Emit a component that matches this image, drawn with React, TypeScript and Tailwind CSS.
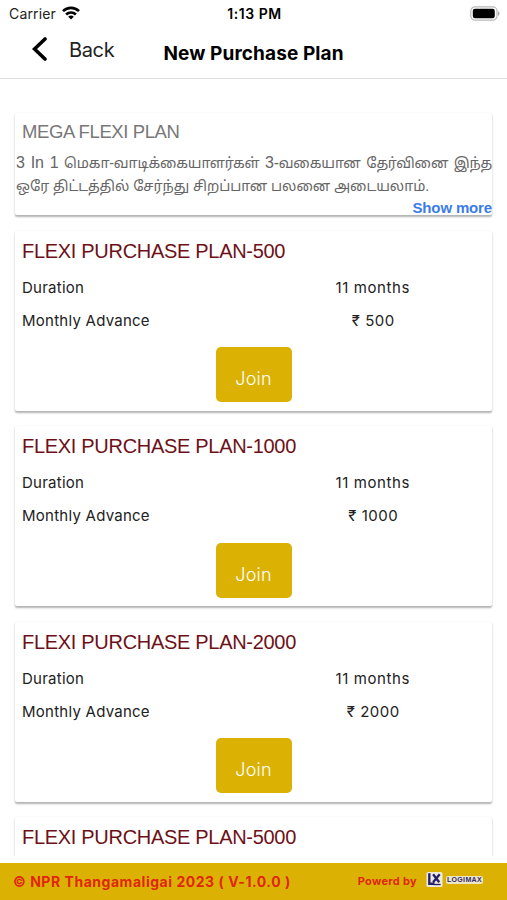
const plans = [
  { name: 'FLEXI PURCHASE PLAN-500', duration: '11 months', advance: '₹ 500' },
  { name: 'FLEXI PURCHASE PLAN-1000', duration: '11 months', advance: '₹ 1000' },
  { name: 'FLEXI PURCHASE PLAN-2000', duration: '11 months', advance: '₹ 2000' },
];

export default function App() {
  return (
    <div className="flex h-[900px] w-[507px] flex-col overflow-hidden bg-white font-['Inter','Noto_Sans',sans-serif] text-black">
      <StatusBar />
      <Header />
      <main className="flex h-[777px] shrink-0 flex-col gap-[15.5px] overflow-hidden px-[15px] pt-[33.5px]">
        <IntroCard />
        {plans.map((p) => (
          <PlanCard key={p.name} {...p} />
        ))}
        <section className="h-[180px] shrink-0 rounded-[2px] shadow-[0_1.5px_2px_rgba(0,0,0,0.3)]">
          <PlanTitle name="FLEXI PURCHASE PLAN-5000" />
        </section>
      </main>
      <Footer />
    </div>
  );
}

function StatusBar() {
  return (
    <div className="grid h-[27px] shrink-0 grid-cols-3 items-center pl-[9px] pr-[6px] text-[14px] leading-[27px]">
      <div className="flex items-center gap-[6px]">
        <span className="tracking-[0.15px] text-[#222]">Carrier</span>
        <svg className="mb-[2px]" width="18" height="14" viewBox="0 0 18 14" fill="none" stroke="#000" strokeWidth="2.6">
          <path d="M1 5.2C5.5 .7 12.5 .7 17 5.2" />
          <path d="M4.1 8.5C6.9 5.8 11.1 5.8 13.9 8.5" />
          <path d="M9 13.5L6.2 10.7C7.8 9.2 10.2 9.2 11.8 10.7Z" fill="#000" stroke="none" />
        </svg>
      </div>
      <span className="-ml-[1px] text-center font-semibold tracking-[0.55px]">1:13 PM</span>
      <svg className="mb-px justify-self-end" width="36" height="15" viewBox="0 0 36 15">
        <rect x="5.8" y=".9" width="26.2" height="13.2" rx="4" fill="#fff" stroke="#b8b8b8" strokeWidth="1.2" />
        <rect x="7.8" y="2.8" width="22" height="9.4" rx="2.3" fill="#000" />
        <path d="M33 5.2C35 5.8 35 9.2 33 9.8Z" fill="#aaa" />
      </svg>
    </div>
  );
}

function Header() {
  return (
    <header className="grid h-[52px] shrink-0 grid-cols-[163.5px_1fr] border-b border-[#dedede]">
      <button className="flex h-[44px] items-center gap-[21px] pl-[32px] text-[20px] tracking-[-0.35px] text-[#222]">
        <svg width="16" height="26" viewBox="0 0 16 26" fill="none" stroke="#000" strokeWidth="3.6" strokeLinecap="round">
          <path d="M13 3L2.5 13L13 23" />
        </svg>
        <span className="pt-px">Back</span>
      </button>
      <h1 className="pt-[1px] text-[19px] font-bold leading-[51px] tracking-[0.1px] whitespace-nowrap">
        New Purchase Plan
      </h1>
    </header>
  );
}

function IntroCard() {
  return (
    <section className="flex h-[102.5px] shrink-0 flex-col rounded-[2px] shadow-[0_1.5px_2px_rgba(0,0,0,0.3)]">
      <h2 className="pl-[7px] pt-[7px] font-['Liberation_Sans',sans-serif] text-[18.5px] leading-[24px] tracking-[-0.4px] text-[#777]">
        MEGA FLEXI PLAN
      </h2>
      <div className="mt-[8px] font-['Liberation_Sans','Noto_Sans_Tamil',sans-serif] text-[14.2px] leading-[23px] whitespace-nowrap text-[#666]">
        <p className="pl-px tracking-[-0.25px] [text-align-last:justify]">
          <span className="text-[16px] leading-none">3 In 1</span> மெகா-வாடிக்கையாளர்கள்{' '}
          <span className="text-[16px] leading-none">3-</span>வகையான தேர்வினை இந்த
        </p>
        <p className="pl-px tracking-[-0.06px]">ஒரே திட்டத்தில் சேர்ந்து சிறப்பான பலனை அடையலாம்.</p>
      </div>
      <button className="self-end font-['Liberation_Sans',sans-serif] text-[15px] font-bold leading-[20px] tracking-[-0.15px] text-[#3c7ce8]">
        Show more
      </button>
    </section>
  );
}

function PlanTitle({ name }: { name: string }) {
  return (
    <h2 className="pl-[7px] pt-[7px] font-['Liberation_Sans',sans-serif] text-[20px] leading-[26px] tracking-[-0.3px] text-[#6e1017]">
      {name}
    </h2>
  );
}

function PlanCard({ name, duration, advance }: { name: string; duration: string; advance: string }) {
  return (
    <section className="flex h-[180px] shrink-0 flex-col rounded-[2px] shadow-[0_1.5px_2px_rgba(0,0,0,0.3)]">
      <PlanTitle name={name} />
      <dl className="mt-[7px] grid grid-cols-2 text-[15px] leading-[33px] tracking-[0.25px] text-[#222]">
        <dt className="pl-[7px]">Duration</dt>
        <dd className="text-center tracking-[0.6px]">{duration}</dd>
        <dt className="pl-[7px]">Monthly Advance</dt>
        <dd className="pl-px text-center tracking-[0.5px]">{advance}</dd>
      </dl>
      <button className="mt-[10.5px] h-[55px] w-[76px] self-center rounded-[5px] bg-[#dbb204] pt-[8px] text-[18px] font-light tracking-[0.15px] text-white">
        Join
      </button>
    </section>
  );
}

function Footer() {
  return (
    <footer className="mt-auto flex h-[37px] shrink-0 items-center bg-[#dbb204] pl-[13px] pr-[24px] font-bold text-[#e0260c]">
      <span className="text-[14px] tracking-[0.53px]">© NPR Thangamaligai 2023 ( V-1.0.0 )</span>
      <span className="ml-auto text-[11px] tracking-[0.3px]">Powerd by</span>
      <div className="mb-[4px] ml-[9px] flex items-center gap-[3px]">
        <svg width="17" height="17" viewBox="0 0 18 17">
          <rect x=".5" y=".5" width="17" height="16" rx="2" fill="#eeeadd" />
          <path d="M3.5 2V13H9M7.5 3L14 11.500M14.500 3L7.500 11.500" fill="none" stroke="#27206e" strokeWidth="2.5" />
          <path d="M8 13.8H15.500" stroke="#27206e" strokeWidth="1.4" />
        </svg>
        <span className="rounded-[2px] bg-[#ede6c4] px-px font-['Liberation_Sans',sans-serif] text-[7px] leading-[8px] tracking-[0.35px] text-[#332a70]">
          LOGIMAX
        </span>
      </div>
    </footer>
  );
}
